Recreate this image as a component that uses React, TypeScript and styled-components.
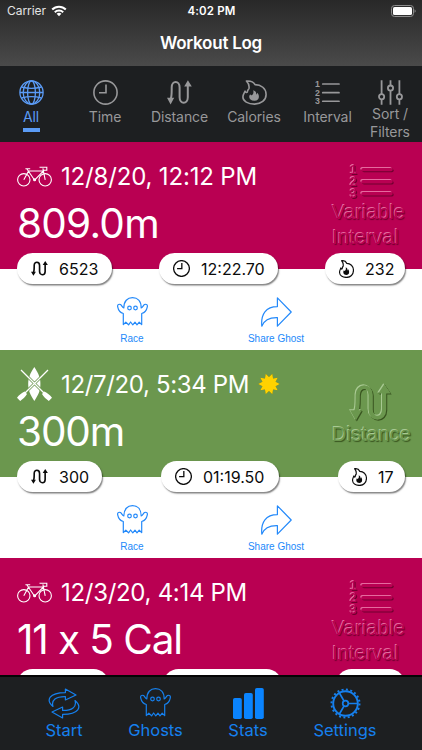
import React from "react";
import styled, { createGlobalStyle } from "styled-components";

const PINK = "#b90052";
const GREEN = "#6b974e";
const BAR = "#1d1f21";
const BLUE = "#1680ee";

const GlobalStyle = createGlobalStyle`
  * { box-sizing: border-box; }
  body { margin: 0; background: #fff; }
`;

const Screen = styled.div`
  width: 422px;
  height: 750px;
  display: flex;
  flex-direction: column;
  overflow: hidden;
  font-family: Inter, "Liberation Sans", sans-serif;
  background: #fff;
`;

const Header = styled.header`
  flex: none;
  height: 66px;
  background: linear-gradient(#282828, #4a4a4a);
  color: #fff;
`;

const StatusBar = styled.div`
  height: 22px;
  display: grid;
  grid-template-columns: 1fr auto 1fr;
  align-items: center;
  padding: 0 6px 0 7px;
  font-size: 12px;
  line-height: 22px;
`;

const Carrier = styled.span`
  display: flex;
  align-items: center;
  gap: 5px;
  color: #e4e4e4;
  letter-spacing: -0.05px;
`;

const Clock = styled.span`
  font-weight: 600;
  font-size: 11.5px;
  letter-spacing: 0.15px;
`;

const BatterySlot = styled.span`
  display: flex;
  justify-content: flex-end;
`;

const Title = styled.h1`
  margin: 10px 0 0;
  text-align: center;
  font-size: 17px;
  line-height: 22px;
  font-weight: 600;
  letter-spacing: -0.25px;
`;

const Tabs = styled.nav`
  flex: none;
  height: 76px;
  display: grid;
  grid-template-columns: 62px 86px 63px 86px 61px 64px;
  background: ${BAR};
  padding-top: 14px;
`;

const Tab = styled.div<{ $active?: boolean }>`
  display: flex;
  flex-direction: column;
  align-items: center;
  color: ${(p) => (p.$active ? "#5b9bf5" : "#98989a")};
`;

const TabLabel = styled.span<{ $tight?: boolean }>`
  margin-top: ${(p) => (p.$tight ? "0" : "3px")};
  font-size: 14px;
  line-height: ${(p) => (p.$tight ? "17.5px" : "18px")};
  text-align: center;
  white-space: pre;
  letter-spacing: -0.1px;
`;

const Underline = styled.span`
  width: 17px;
  height: 4px;
  margin-top: 2px;
  background: currentColor;
`;

const Log = styled.main`
  flex: 1;
  min-height: 0;
  overflow: hidden;
`;

const Entry = styled.article`
  height: 208px;
`;

const Banner = styled.section<{ $color: string }>`
  height: 127px;
  display: flex;
  justify-content: space-between;
  padding: 0 0 0 17px;
  background: ${(p) => p.$color};
  color: #fff;
`;

const DateRow = styled.div`
  display: flex;
  align-items: center;
  gap: 9px;
  height: 36px;
  margin-top: 16px;
`;

const DateText = styled.span<{ $spacing: number }>`
  font-size: 24px;
  line-height: 36px;
  padding-top: 2px;
  white-space: nowrap;
  letter-spacing: ${(p) => p.$spacing}px;
`;

const Amount = styled.div<{ $spacing: number }>`
  font-size: 40.5px;
  font-weight: 370;
  line-height: 50px;
  margin-top: 5px;
  letter-spacing: ${(p) => p.$spacing}px;
  white-space: nowrap;
`;

const Emboss = styled.div<{ $color: string; $light: string; $dark: string; $top: number }>`
  width: 90px;
  padding-top: ${(p) => p.$top}px;
  color: ${(p) => p.$color};
  font-family: "Liberation Sans", sans-serif;
  svg {
    display: block;
    margin: 0 0 1px 18px;
    overflow: visible;
    filter: drop-shadow(-0.9px -0.9px 0.2px ${(p) => p.$light}) drop-shadow(1px 1px 0.3px ${(p) => p.$dark});
  }
  span {
    display: block;
    text-shadow: -0.8px -0.8px 0.4px ${(p) => p.$light}, 1px 1px 1px ${(p) => p.$dark};
    font-size: 20px;
    line-height: 24.5px;
    letter-spacing: 0.15px;
    white-space: pre;
  }
`;

const Pills = styled.div`
  position: relative;
  display: flex;
  justify-content: space-between;
  margin: -16px 17px 0;
`;

const Pill = styled.div<{ $width: number }>`
  width: ${(p) => p.$width}px;
  height: 31px;
  display: flex;
  align-items: center;
  gap: 11px;
  padding-left: 14px;
  border-radius: 15.5px;
  background: #fff;
  color: #0b0b0b;
  box-shadow: 1px 1.5px 1.5px rgba(0, 0, 0, 0.5);
  font-size: 16px;
  letter-spacing: 0;
  white-space: nowrap;
`;

const Actions = styled.div`
  display: flex;
  justify-content: center;
  gap: 60px;
  padding-right: 14px;
  margin-top: 13px;
  color: #2389fa;
`;

const Action = styled.div`
  width: 84px;
  display: grid;
  grid-template-rows: 36px 12px;
  justify-items: center;
  font-family: "Liberation Sans", sans-serif;
  font-size: 10px;
  line-height: 12px;
`;

const BottomBar = styled.footer`
  flex: none;
  height: 75px;
  display: grid;
  grid-template-columns: 110px 73px 112px 82px;
  padding-left: 9px;
  border-top: 2px solid #050505;
  background: ${BAR};
  color: ${BLUE};
`;

const NavItem = styled.div`
  display: grid;
  grid-template-rows: 31px 22px;
  justify-items: center;
  align-content: start;
  padding-top: 11px;
  font-size: 16.5px;
  line-height: 22px;
`;

type Size = { w?: number; h?: number; sw?: number };

const stroke = { fill: "none", stroke: "currentColor" } as const;

const Wifi = () => (
  <svg width="16" height="12" viewBox="0 0 16 12" fill="none" stroke="#fff" strokeWidth="2">
    <path d="M1.2 4.5A9.6 9.6 0 0 1 14.8 4.5" />
    <path d="M3.8 7.2A6 6 0 0 1 12.2 7.2" />
    <path d="M8 11.2L5.6 8.8A3.5 3.5 0 0 1 10.4 8.8Z" fill="#fff" stroke="none" />
  </svg>
);

const Battery = () => (
  <svg width="25" height="12" viewBox="0 0 25 12">
    <rect x=".5" y=".5" width="22" height="11" rx="3" fill="none" stroke="#8d8d8d" />
    <rect x="2" y="2" width="19" height="8" rx="1.6" fill="#fff" />
    <path d="M23.6 4.2Q25.6 6 23.6 7.8Z" fill="#9a9a9a" />
  </svg>
);

const Globe = () => (
  <svg width="25" height="25" viewBox="0 0 25 25" {...stroke} strokeWidth="1.3">
    <circle cx="12.5" cy="12.5" r="11.6" />
    <ellipse cx="12.5" cy="12.5" rx="8.3" ry="11.6" />
    <ellipse cx="12.5" cy="12.5" rx="3.9" ry="11.6" />
    <path d="M1 12.5H24M2.5 7Q12.5 9.8 22.5 7M2.5 18Q12.5 15.2 22.5 18" />
  </svg>
);

const ClockIcon = ({ w = 25, sw = 1.6 }: Size) => (
  <svg width={w} height={w} viewBox="0 0 25 25" {...stroke} strokeWidth={sw}>
    <circle cx="12.5" cy="12.5" r="11.6" />
    <path d="M13 4.5V12.8H6" />
  </svg>
);

const Route = ({ w = 25, h = 25, sw = 2 }: Size) => (
  <svg width={w} height={h} viewBox="0 0 25 25" preserveAspectRatio="none" {...stroke} strokeWidth={sw}>
    <path d="M3.6 19C4.8 17 4.7 14 4.7 7.5C4.7 .3 12.6 .3 12.6 7.5V17.3C12.6 24.6 20.8 24.6 20.8 17.3V5" />
    <path d="M0 17.8H7.2L3.6 24.6ZM17.2 6.5L20.9 .2L24.8 6.5Z" fill="currentColor" stroke="none" />
  </svg>
);

const Flame = ({ w = 25, h = 25, sw = 1.6 }: Size) => (
  <svg width={w} height={h} viewBox="0 0 25 25" preserveAspectRatio="none" {...stroke} strokeWidth={sw} strokeLinejoin="round">
    <path d="M4.4 1C9 .6 11.8 2.4 13 4.6C19 4.6 24.1 8.4 24.1 14.4C24.1 20.2 19 24.1 12.6 24.1C5.8 24.1 .9 21.2 .9 17C.9 14.6 2.1 13.4 3.1 11.2C3.6 12.4 4.4 12.8 5.3 12.2C5.2 10.8 6 9.6 7 8.4C7.4 5.8 6.4 3 4.4 1Z" />
    <path d="M11.2 10.2C14.2 11.4 14.4 13.2 14.2 14.5C15 14.2 15.2 13.5 15.3 12.8C17.8 15.2 17.8 20.8 12.4 20.8C7.4 20.8 6 16.8 8.2 14.2C8.6 15 9 15.3 9.6 15.3C11.4 14.2 11.8 12.4 11.2 10.2Z" fill="currentColor" stroke="none" />
  </svg>
);

const NumberedList = ({ w = 25, h = 25, sw = 1.7 }: Size) => (
  <svg width={w} height={h} viewBox={`0 0 ${w} ${h}`} {...stroke} strokeWidth={sw} strokeLinecap="round">
    {[0, 1, 2].map((i) => {
      const y = h * (0.16 + i * 0.345);
      return (
        <g key={i}>
          <path d={`M${w * 0.31} ${y}H${w - 1}`} />
          <text
            x="0"
            y={y + h * 0.12}
            fontFamily="Liberation Sans"
            fontWeight="700"
            fontSize={h * 0.35}
            fill="currentColor"
            stroke="none"
          >
            {i + 1}
          </text>
        </g>
      );
    })}
  </svg>
);

const Sliders = () => (
  <svg width="25" height="25" viewBox="0 0 25 25" {...stroke} strokeWidth="1.8">
    <path d="M3.6 .3V14M3.6 19.6V24.7M12.5 .3V5.3M12.5 10.9V24.7M21.4 .3V14M21.4 19.6V24.7" />
    <circle cx="3.6" cy="16.8" r="2.6" />
    <circle cx="12.5" cy="8.1" r="2.6" />
    <circle cx="21.4" cy="16.8" r="2.6" />
  </svg>
);

const Bicycle = () => (
  <svg width="35" height="21" viewBox="0 0 35 21" {...stroke} strokeWidth="1.1">
    <circle cx="6.8" cy="13.8" r="6.2" />
    <circle cx="28.2" cy="13.8" r="6.2" />
    <path d="M8.4 2.8H13.2M6.8 13.8L11.6 5M9.8 2.8L17.6 14.2L26.4 5H11.4M28.2 13.8L25.9 2.4M22.5 1.2H29.8V4.2H26.4" />
    <circle cx="17.6" cy="13.8" r="1" />
  </svg>
);

const Rowing = () => (
  <svg width="35" height="34" viewBox="0 0 35 34">
    <path d="M17.3 0C21.8 7 23.4 11 23.4 17S21.8 27 17.3 34C12.8 27 11.2 23 11.2 17S12.8 7 17.3 0Z" fill="#fff" />
    <path d="M4 3L30 29M31 3L5 29" stroke={GREEN} strokeWidth="2.8" />
    <path d="M4 3L30 29M31 3L5 29" stroke="#fff" strokeWidth="1.3" />
    <path d="M7.6 24.5L10 27C8.5 30 5.5 32 3.2 34L0 30.8C2 28 4.5 26 7.6 24.5ZM27.4 24.5L25 27C26.5 30 29.5 32 31.8 34L35 30.8C33 28 30.5 26 27.4 24.5Z" fill="#fff" />
  </svg>
);

const sunPoints = Array.from({ length: 20 }, (_, i) => {
  const r = i % 2 ? 6.9 : 10.8;
  const a = (i * Math.PI) / 10;
  return `${11 + r * Math.cos(a)},${11 + r * Math.sin(a)}`;
}).join(" ");

const SunSvg = styled.svg`
  filter: drop-shadow(0.8px 0.8px 0.5px rgba(60, 60, 0, 0.55));
`;

const Sun = () => (
  <SunSvg width="22" height="22" viewBox="0 0 22 22">
    <polygon points={sunPoints} fill="#ffd200" />
  </SunSvg>
);

const Ghost = () => (
  <svg width="31" height="29" viewBox="0 0 31 29" {...stroke} strokeWidth="1.2" strokeLinejoin="round">
    <path d="M6.8 11C5 10.4 5 8.6 3.6 7.6C1.5 6.6.3 8 .7 9.8C1.3 13 3 15.5 6.3 16.5V27.6L8.8 25.2L11.6 27.8L13.6 25L15.8 27.8L18 25.2L20 27.8L22.2 25.2L24.7 27.6V16.5C28 15.5 29.7 13 30.3 9.8C30.7 8 29.5 6.6 27.4 7.6C26 8.6 26 10.4 24.2 11C24.2 4 20.5.7 15.5.7S6.8 4 6.8 11Z" />
    <circle cx="12.5" cy="11" r="1.8" />
    <circle cx="18.5" cy="11" r="1.8" />
  </svg>
);

const Share = () => (
  <svg width="31" height="30" viewBox="0 0 31 30" {...stroke} strokeWidth="1.2" strokeLinejoin="round">
    <path d="M.8 29.2C-.3 17 5 9.6 16.4 9.6V.8L30.2 15L16.4 29.2V20.6C9 20.4 3.6 22 .8 29.2Z" />
  </svg>
);

const Cycle = () => (
  <svg width="32" height="31" viewBox="0 0 32 31" {...stroke} strokeWidth="1.2" strokeLinejoin="round">
    <path d="M5 18.5C-2.5 12 1 4.8 17.4 4.6V1L28 7L17.4 12V8.6C8 8.4 3 12 5 18.5Z" />
    <path d="M27 12.5C34.5 19 31 26.2 14.6 26.4V30L4 24L14.6 19V22.4C24 22.6 29 19 27 12.5Z" />
  </svg>
);

const Bars = () => (
  <svg width="31" height="31" viewBox="0 0 31 31" fill="#0a84ff">
    <rect x="0" y="10" width="8.8" height="21" rx="1.8" />
    <rect x="11" y="5" width="8.8" height="26" rx="1.8" />
    <rect x="22" y="0" width="8.8" height="31" rx="1.8" />
  </svg>
);

const Gear = () => (
  <svg width="31" height="31" viewBox="0 0 31 31" {...stroke}>
    <circle cx="15.5" cy="15.5" r="12.3" strokeWidth="1.9" />
    <circle cx="15.5" cy="15.5" r="14" strokeWidth="2" strokeDasharray="2 2.398" />
    <circle cx="15.5" cy="15.5" r="2.8" strokeWidth="1.7" />
    <path d="M18.3 15.5H27.5M14.1 13.1L9.4 5M14.1 17.9L9.4 26" strokeWidth="1.7" />
  </svg>
);

type Stat = { width: number; value?: string };

type Workout = {
  color: string;
  light: string;
  dark: string;
  sport: React.ReactNode;
  date: string;
  dateSpacing: number;
  sunny?: boolean;
  amount: string;
  amountSpacing: number;
  kind: string;
  distance: Stat;
  time: Stat;
  calories: Stat;
  actions?: boolean;
};

const pink = { color: PINK, light: "#e56a9e", dark: "#70002f", sport: <Bicycle />, kind: "Variable\nInterval" };

const workouts: Workout[] = [
  {
    ...pink,
    date: "12/8/20, 12:12 PM",
    dateSpacing: -0.17,
    amount: "809.0m",
    amountSpacing: -0.75,
    distance: { width: 95, value: "6523" },
    time: { width: 119, value: "12:22.70" },
    calories: { width: 80, value: "232" },
    actions: true,
  },
  {
    color: GREEN,
    light: "#a9c993",
    dark: "#38541f",
    sport: <Rowing />,
    date: "12/7/20, 5:34 PM",
    dateSpacing: -0.35,
    sunny: true,
    amount: "300m",
    amountSpacing: -1.1,
    kind: "Distance",
    distance: { width: 85, value: "300" },
    time: { width: 118, value: "01:19.50" },
    calories: { width: 67, value: "17" },
    actions: true,
  },
  {
    ...pink,
    date: "12/3/20, 4:14 PM",
    dateSpacing: -0.3,
    amount: "11 x 5 Cal",
    amountSpacing: -1.1,
    distance: { width: 92 },
    time: { width: 119 },
    calories: { width: 69 },
  },
];

const WorkoutEntry = ({ w }: { w: Workout }) => (
  <Entry>
    <Banner $color={w.color}>
      <div>
        <DateRow>
          {w.sport}
          <DateText $spacing={w.dateSpacing}>{w.date}</DateText>
          {w.sunny && <Sun />}
        </DateRow>
        <Amount $spacing={w.amountSpacing}>{w.amount}</Amount>
      </div>
      <Emboss $color={w.color} $light={w.light} $dark={w.dark} $top={w.kind === "Distance" ? 34 : 22}>
        {w.kind === "Distance" ? <Route w={41} h={37} sw={2.6} /> : <NumberedList w={42} h={35} sw={3.4} />}
        <span>{w.kind}</span>
      </Emboss>
    </Banner>
    <Pills>
      <Pill $width={w.distance.width}>
        <Route w={17} h={15} sw={2.4} />
        {w.distance.value}
      </Pill>
      <Pill $width={w.time.width}>
        <ClockIcon w={17} sw={1.9} />
        {w.time.value}
      </Pill>
      <Pill $width={w.calories.width}>
        <Flame w={15} h={18} sw={1.9} />
        {w.calories.value}
      </Pill>
    </Pills>
    {w.actions && (
      <Actions>
        <Action>
          <Ghost />
          Race
        </Action>
        <Action>
          <Share />
          Share Ghost
        </Action>
      </Actions>
    )}
  </Entry>
);

export default function App() {
  return (
    <Screen>
      <GlobalStyle />
      <Header>
        <StatusBar>
          <Carrier>
            Carrier
            <Wifi />
          </Carrier>
          <Clock>4:02 PM</Clock>
          <BatterySlot>
            <Battery />
          </BatterySlot>
        </StatusBar>
        <Title>Workout Log</Title>
      </Header>
      <Tabs>
        <Tab $active>
          <Globe />
          <TabLabel>All</TabLabel>
          <Underline />
        </Tab>
        <Tab>
          <ClockIcon />
          <TabLabel>Time</TabLabel>
        </Tab>
        <Tab>
          <Route />
          <TabLabel>Distance</TabLabel>
        </Tab>
        <Tab>
          <Flame />
          <TabLabel>Calories</TabLabel>
        </Tab>
        <Tab>
          <NumberedList />
          <TabLabel>Interval</TabLabel>
        </Tab>
        <Tab>
          <Sliders />
          <TabLabel $tight>{"Sort /\nFilters"}</TabLabel>
        </Tab>
      </Tabs>
      <Log>
        {workouts.map((w) => (
          <WorkoutEntry key={w.date} w={w} />
        ))}
      </Log>
      <BottomBar>
        <NavItem>
          <Cycle />
          Start
        </NavItem>
        <NavItem>
          <Ghost />
          Ghosts
        </NavItem>
        <NavItem>
          <Bars />
          Stats
        </NavItem>
        <NavItem>
          <Gear />
          Settings
        </NavItem>
      </BottomBar>
    </Screen>
  );
}
